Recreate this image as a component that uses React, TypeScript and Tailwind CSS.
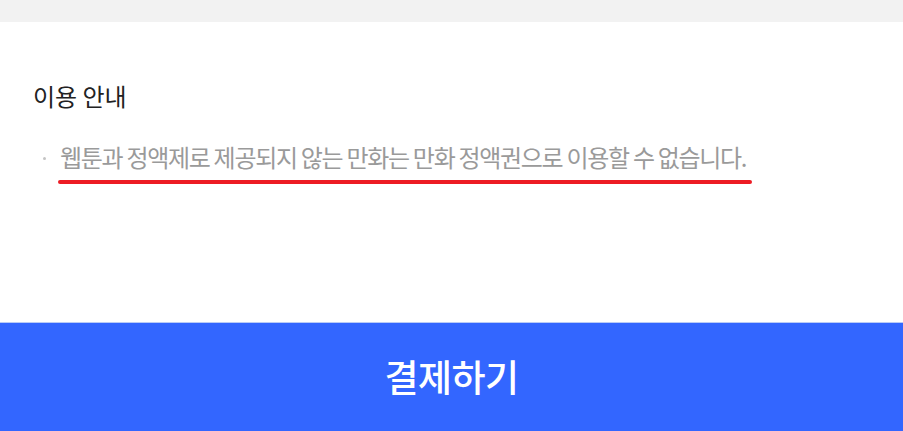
import React from "react";

export default function App() {
  const ko = { fontFamily: '"Noto Sans CJK KR", "Noto Sans", sans-serif' };
  return (
    <div className="w-[903px] h-[431px] flex flex-col bg-white overflow-hidden" style={ko}>
      <div className="h-[22px] bg-[#f2f2f2]" />
      <div className="flex-1 flex flex-col">
        <div className="pl-[33px] pt-[57px] text-[24px] leading-[34px] text-[#222]">
          이용 안내
        </div>
        <div className="flex items-center mt-[29px] pl-[43px] h-[30px]">
          <span className="w-[3px] h-[3px] rounded-full bg-[#c4c4c4] mr-[14px] mt-[2px]" />
          <span className="text-[24px] leading-[30px] text-[#9a9a9a] tracking-[-1.3px] whitespace-nowrap">
            웹툰과 정액제로 제공되지 않는 만화는 만화 정액권으로 이용할 수 없습니다.
          </span>
        </div>
        <div className="ml-[58px] mt-[8px] w-[694px] h-[4px] rounded-full bg-[#ed1c24]" />
      </div>
      <div className="h-[109px] bg-[#3366ff] border-t border-[#b9cbf7] flex items-center justify-center">
        <span className="text-[37px] font-medium text-white tracking-[-0.5px]">결제하기</span>
      </div>
    </div>
  );
}
